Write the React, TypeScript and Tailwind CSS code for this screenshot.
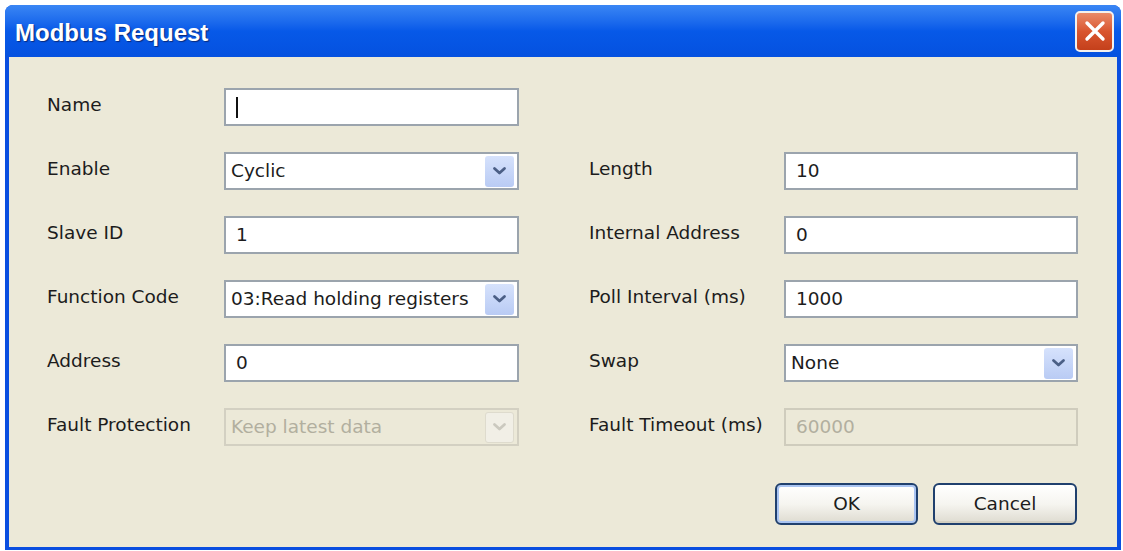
import type { ReactNode } from 'react';

const ui = "font-['DejaVu_Sans',sans-serif] text-[18.5px]";

function Chevron({ disabled }: { disabled?: boolean }) {
  return (
    <svg width="15" height="10" viewBox="0 0 15 10" fill="none">
      <path
        d="M2.5 2.5l5 4.5 5-4.5"
        stroke={disabled ? '#cbc9bf' : '#4b5f86'}
        strokeWidth="2.8"
        strokeLinecap="round"
        strokeLinejoin="round"
      />
    </svg>
  );
}

function Label({ children }: { children: ReactNode }) {
  return <div className="text-[#1c1c1c] leading-none -mt-[4px]">{children}</div>;
}

function TextField({ value, disabled, caret }: { value?: string; disabled?: boolean; caret?: boolean }) {
  return (
    <div
      className={`h-[38px] flex items-center border-2 pl-[10px] ${
        disabled ? 'border-[#cfccbd] bg-[#ece9d8] text-[#b2af9f]' : 'border-[#9ba4ad] bg-white text-[#1c1c1c]'
      }`}
    >
      {caret && <div className="w-[2px] h-[21px] bg-[#111]" />}
      {value}
    </div>
  );
}

function Select({ value, disabled }: { value: string; disabled?: boolean }) {
  return (
    <div
      className={`h-[38px] flex items-center border-2 pl-[5px] pr-[3px] ${
        disabled ? 'border-[#d3d0c2] bg-[#ece9d8] text-[#b2af9f]' : 'border-[#9ba4ad] bg-white text-[#1c1c1c]'
      }`}
    >
      <span className="flex-1 whitespace-nowrap overflow-hidden">{value}</span>
      <div
        className={`w-[29px] h-[31px] rounded-[3px] flex items-center justify-center ${
          disabled ? 'bg-[#f1efe6] border border-[#dedbcd]' : 'bg-linear-to-b from-[#d6e2fc] to-[#b9cbf4]'
        }`}
      >
        <Chevron disabled={disabled} />
      </div>
    </div>
  );
}

function Button({ children, focused }: { children: ReactNode; focused?: boolean }) {
  return (
    <button
      className={`h-[42px] rounded-[6px] border-2 border-[#20406e] bg-linear-to-b from-white via-[#f6f5f0] to-[#dedbd0] text-[#1c1c1c] ${
        focused ? 'w-[143px] shadow-[inset_0_0_0_2px_#a9c4f2]' : 'w-[144px] shadow-[inset_0_-2px_0_#d2cfc2]'
      }`}
    >
      {children}
    </button>
  );
}

export default function App() {
  return (
    <div className={`w-[1123px] h-[551px] bg-white pl-[5px] pt-[5px] ${ui}`}>
      <div className="w-[1116px] h-[545px] flex flex-col rounded-t-[8px] bg-[#0a4ee0] overflow-hidden">
        {/* title bar */}
        <div className="h-[52px] shrink-0 flex items-center justify-between pl-[10px] pr-[7px] bg-linear-to-b from-[#3a86f4] via-[#0759e8] to-[#0551df]">
          <span className="pt-[4px] text-white font-['Liberation_Sans',sans-serif] font-bold text-[24px] [text-shadow:1px_1px_1px_#0a2a7a]">
            Modbus Request
          </span>
          <div className="w-[39px] h-[41px] rounded-[5px] border-2 border-[#f4f1ee] bg-linear-to-b from-[#e98a68] via-[#d9552e] to-[#c4401b] flex items-center justify-center">
            <svg width="22" height="22" viewBox="0 0 22 22">
              <path d="M3 3l16 16M19 3L3 19" stroke="white" strokeWidth="3.4" strokeLinecap="round" />
            </svg>
          </div>
        </div>

        {/* dialog body */}
        <div className="flex-1 mx-[4px] mb-[3px] bg-[#ece9d8] pl-[38px] pt-[31px]">
          <div className="flex">
            <div className="grid grid-cols-[177px_295px] auto-rows-[38px] gap-y-[26px] items-center">
              <Label>Name</Label>
              <TextField caret />
              <Label>Enable</Label>
              <Select value="Cyclic" />
              <Label>Slave ID</Label>
              <TextField value="1" />
              <Label>Function Code</Label>
              <Select value="03:Read holding registers" />
              <Label>Address</Label>
              <TextField value="0" />
              <Label>Fault Protection</Label>
              <Select value="Keep latest data" disabled />
            </div>
            <div className="ml-[70px] mt-[64px] grid grid-cols-[195px_294px] auto-rows-[38px] gap-y-[26px] items-center">
              <Label>Length</Label>
              <TextField value="10" />
              <Label>Internal Address</Label>
              <TextField value="0" />
              <Label>Poll Interval (ms)</Label>
              <TextField value="1000" />
              <Label>Swap</Label>
              <Select value="None" />
              <Label>Fault Timeout (ms)</Label>
              <TextField value="60000" disabled />
            </div>
          </div>
          <div className="flex justify-end gap-[15px] mt-[37px] pr-[40px]">
            <Button focused>OK</Button>
            <Button>Cancel</Button>
          </div>
        </div>
      </div>
    </div>
  );
}
